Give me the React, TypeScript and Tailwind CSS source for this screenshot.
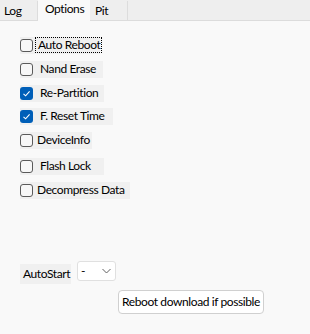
import React from "react";

type Opt = { label: string; checked: boolean; w: string; mt: string; textPad: string; focus?: boolean };

const options: Opt[] = [
  { label: "Auto Reboot", checked: false, w: "w-[80px]", mt: "mt-0", textPad: "pl-[2px]", focus: true },
  { label: "Nand Erase", checked: false, w: "w-[83px]", mt: "mt-[7px]", textPad: "pl-[5px]" },
  { label: "Re-Partition", checked: true, w: "w-[84px]", mt: "mt-[7px]", textPad: "pl-[5px]" },
  { label: "F. Reset Time", checked: true, w: "w-[93px]", mt: "mt-[6px]", textPad: "pl-[5px]" },
  { label: "DeviceInfo", checked: false, w: "w-[72px]", mt: "mt-[7px]", textPad: "pl-[2px]" },
  { label: "Flash Lock", checked: false, w: "w-[84px]", mt: "mt-[9px]", textPad: "pl-[5px]" },
  { label: "Decompress Data", checked: false, w: "w-[110px]", mt: "mt-[7px]", textPad: "pl-[2px]" },
];

const Box = ({ checked }: { checked: boolean }) =>
  checked ? (
    <span className="flex h-[13px] w-[13px] shrink-0 items-center justify-center rounded-[3px] bg-[#005fb8]">
      <svg width="9" height="9" viewBox="0 0 9 9" fill="none">
        <path d="M1.5 4.8 L3.6 6.8 L7.6 2.3" stroke="white" strokeWidth="1.1" />
      </svg>
    </span>
  ) : (
    <span className="block h-[13px] w-[13px] shrink-0 rounded-[3px] border border-[#5a5a5a] bg-[#f7f7f7]" />
  );

export default function App() {
  return (
    <div
      className="h-[334px] w-[310px] whitespace-nowrap bg-[#f9f9f9] text-[12px] tracking-[-0.4px] text-black"
      style={{ fontFamily: 'Lato, "Open Sans", sans-serif' }}
    >
      {/* tab strip */}
      <div className="flex h-[21px] items-end border-b border-[#dcdcdc] bg-[#eeeeee]">
        <div className="flex h-[19px] w-[38px] items-center border-r border-[#dcdcdc] pl-[4px] leading-none">Log</div>
        <div className="-mb-px flex h-[22px] w-[52px] items-start bg-[#f9f9f9] pl-[7px] pt-[2px] leading-[16px]">Options</div>
        <div className="flex h-[19px] w-[38px] items-center border-r border-[#dcdcdc] pl-[5px] leading-none">Pit</div>
      </div>

      <div className="flex flex-col pl-[20px] pt-[16px]">
        {options.map((o) => (
          <div key={o.label} className={`flex h-[17px] items-start bg-[#f0f0f0] ${o.w} ${o.mt}`}>
            <div className="pt-[2px]">
              <Box checked={o.checked} />
            </div>
            <span
              className={`ml-[2px] flex h-[16px] items-center ${o.textPad} pr-[1px] leading-none ${
                o.focus ? "border border-dotted border-black" : ""
              }`}
            >
              {o.label}
            </span>
          </div>
        ))}

        <div className="mt-[62px] flex items-start">
          <div className="mt-[3px] flex h-[20px] w-[51px] items-center bg-[#f0f0f0] pl-[3px]">AutoStart</div>
          <div className="ml-[6px] flex h-[20px] w-[39px] items-center justify-between rounded-[3px] border border-[#e0e0e0] bg-white pl-[3px] pr-[4px]">
            <span>-</span>
            <svg width="9" height="6" viewBox="0 0 9 6" fill="none">
              <path d="M0.5 1 L4.5 5 L8.5 1" stroke="#606060" strokeWidth="1" />
            </svg>
          </div>
        </div>
        <div className="ml-[98px] mt-[6px] flex h-[24px] w-[146px] items-center justify-center rounded-[4px] border border-[#d0d0d0] bg-white">
          Reboot download if possible
        </div>
      </div>
    </div>
  );
}
